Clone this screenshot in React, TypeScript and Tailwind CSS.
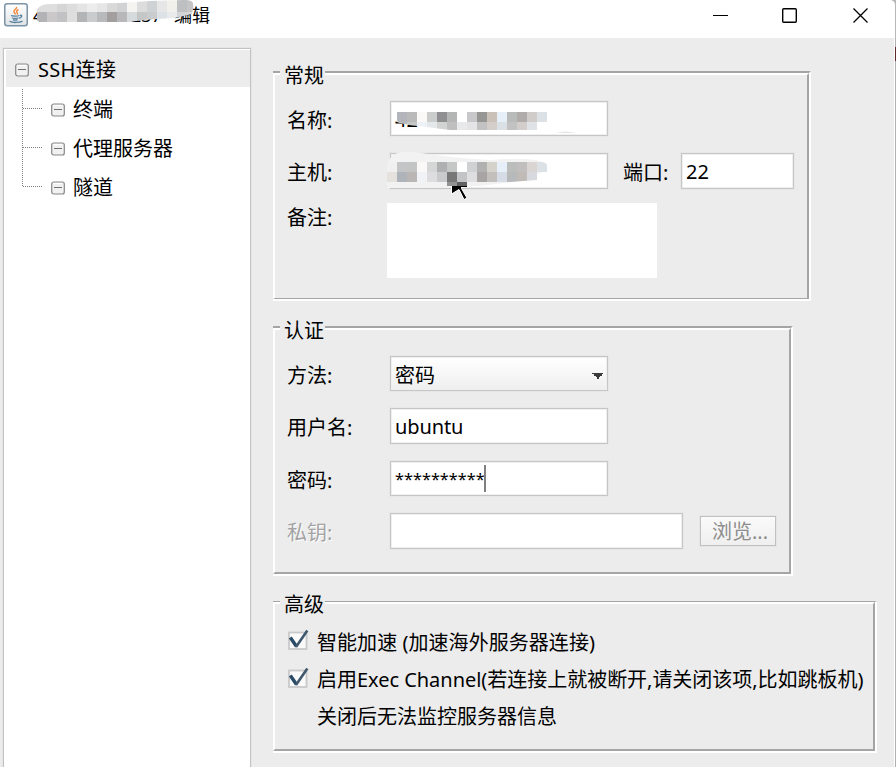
import React from "react";
import clsx from "clsx";

type Mosaic = { x: number; y: number; h: number; colors: string[] };

const TITLE_MOSAIC: Mosaic[] = [
  { x: 7, y: 0, h: 12, colors: ["#dedede", "#dedede", "#d6d6d6", "#dddddd", "#e4e4e4", "#ececec", "#e6e6e6", "#d9d9d9", "#d0d2d4", "#f5f4f1", "#dcdcdc", "#cfd2d5", "#e6e6e6", "#f1f0eb", "#bdbfc1", "#c5c5c5"] },
  { x: 7, y: 12, h: 10, colors: ["#b3b3b5", "#cac8c8", "#c2c2c4", "#dedede", "#b2b4b6", "#c9cbcd", "#b7b9bb", "#a39f9f", "#b8b8ba", "#d5dadd", "#c5c7c6", "#c9cbcd", "#dce2e6", "#e8eaec", "#d2d4d6", "#d8d8d8"] },
];

const NAME_MOSAIC: Mosaic[] = [
  { x: 7, y: 11, h: 10, colors: ["#b2b6bb", "#bababa", "#fbf9f7", "#cbcdcd", "#8f8f91", "#b4b5b5", "#ffffff", "#c8c8cb", "#969694", "#cac1b9", "#e7f0f8", "#b9bbbb", "#b0acac", "#cfccc9", "#dce1e6"] },
  { x: 7, y: 21, h: 8, colors: ["#b6babd", "#c6c8c8", "#eef1f5", "#e5e8eb", "#d2d3d3", "#bfbfbf", "#e8e9ea", "#e4e4e6", "#c2c2c3", "#d4ceca", "#dbe0e4", "#c2c2c2", "#d3cecb", "#dfe3e8"] },
];

const HOST_MOSAIC: Mosaic[] = [
  { x: -3, y: 9, h: 10, colors: ["#f0f0f0", "#c3c5c7", "#c3c5c5", "#fbf9f7", "#d5d7d7", "#aeb0b1", "#c5c7c7", "#ffffff", "#d0d1d3", "#b1b1b2", "#d5d1cb", "#e7f0f8", "#bbbdbd", "#c0bfbd", "#dad5d2", "#dce1e6"] },
  { x: -3, y: 19, h: 10, colors: ["#e5e2dd", "#afb3ba", "#b9b6b5", "#f0f2f5", "#dddddf", "#c9cacb", "#777777", "#c2c4c6", "#dedee0", "#a8a4a3", "#c2bfbd", "#d5dce5", "#b7b9bb", "#c0bbb7", "#d7d9df"] },
];

function Cells({ rows }: { rows: Mosaic[] }) {
  return (
    <>
      {rows.map((row, r) =>
        row.colors.map((color, i) => (
          <rect key={`${r}-${i}`} x={row.x + i * 10} y={row.y} width={10} height={row.h} fill={color} shapeRendering="crispEdges" />
        )),
      )}
    </>
  );
}

function JavaIcon() {
  return (
    <svg width="24" height="24" viewBox="0 0 24 24" fill="none" className="shrink-0">
      <defs>
        <linearGradient id="java-bg" x1="0" y1="0" x2="0" y2="1">
          <stop offset="0" stopColor="#ffffff" />
          <stop offset="1" stopColor="#dfe3e6" />
        </linearGradient>
      </defs>
      <rect x="0.75" y="0.75" width="22.5" height="22" rx="2.5" fill="url(#java-bg)" stroke="#7d94a6" strokeWidth="1.5" />
      <path d="M12.5 4c.8 2-3.5 3-2.500 5 .4.9 1.4 1.2 1.3 2.500M14.500 6.500c-2 1-2.500 2-1.300 3.200.6.6.3 1.300-.2 1.800" stroke="#ee8434" strokeWidth="1.4" />
      <path d="M7 12.500c1 .8 7 .8 8.500 0M8 14.700c1.500.9 5 .9 6.500 0M9 16.600c1.200.6 3.300.6 4.500 0M16 12.300c2.500-.5 2.300 2-.8 3M5.500 18.300c3 1.700 10 1.500 13-.2" stroke="#557f9e" strokeWidth="1.3" />
    </svg>
  );
}

function TreeBox() {
  return (
    <svg width="14" height="14" viewBox="0 0 14 14" fill="none" className="shrink-0">
      <rect x="0.7" y="1" width="12.6" height="12" rx="2" fill="#f1f1f1" stroke="#878787" strokeWidth="1.2" />
      <path d="M2.5 2.500h9" stroke="#fff" />
      <path d="M3 6.500h8" stroke="#6f6f6f" />
    </svg>
  );
}

function TreeItem({ label }: { label: string }) {
  return (
    <div className="flex h-[39px] items-center pl-[46px]">
      <TreeBox />
      <span className="ml-[8px]">{label}</span>
    </div>
  );
}

type GroupProps = {
  title: string;
  outer: string;
  inner: string;
  children: React.ReactNode;
};

function Group({ title, outer, inner, children }: GroupProps) {
  return (
    <section className={clsx("flex border-r-2 border-b-2 border-t-[#a5a5a5] border-r-white border-b-white", outer)}>
      <div className={clsx("flex-1 border-t-2 border-r-2 border-l-2 border-t-white border-r-[#a5a5a5] border-b-[#a5a5a5] border-l-white", inner)}>
        <div className="-mt-3 ml-[5px] flex h-6 w-[45px] items-center bg-[#ececec] pt-[2px] pl-[4px]">{title}</div>
        <div className="pl-[11px]">{children}</div>
      </div>
    </section>
  );
}

type RowProps = {
  label: string;
  className: string;
  labelClass?: string;
  children: React.ReactNode;
};

function Row({ label, className, labelClass = "items-center pt-[4px]", children }: RowProps) {
  return (
    <div className={clsx("flex", className)}>
      <div className={clsx("flex w-[104px] shrink-0 pl-px", labelClass)}>{label}</div>
      {children}
    </div>
  );
}

function Field({ className, children }: { className: string; children?: React.ReactNode }) {
  return (
    <div className={clsx("relative flex h-full shrink-0 items-center border border-[#c6c6c6] bg-white pl-1 shadow-[inset_0_0_0_1px_#efefef,0_0_0_1px_#e7e7e7]", className)}>
      {children}
    </div>
  );
}

function CheckMark() {
  return (
    <svg width="22" height="22" viewBox="0 0 22 22" fill="none" className="-mt-[3px] shrink-0">
      <rect x="2" y="3.500" width="17.500" height="16.500" fill="#fafafa" stroke="#c9c9c9" strokeWidth="1.8" />
      <path d="M3.300 8.500 9.500 17.500" stroke="#294a66" strokeWidth="3.4" />
      <path d="M9 18 20.300 1.500" stroke="#40586d" strokeWidth="2.6" />
    </svg>
  );
}

function TitleBar() {
  return (
    <header className="flex h-[38px] bg-white">
      <div className="relative flex h-[30px] flex-1 items-center pl-1">
        <JavaIcon />
        <span className="ml-[5px] w-[98px] text-[18px]">4</span>
        <span className="text-[18px]">237</span>
        <span className="ml-[12px] text-[18px]">编辑</span>
        <svg className="absolute top-0 left-[30px]" width="170" height="24" viewBox="0 0 170 24">
          <clipPath id="title-smudge">
            <path d="M5.500 13C7 7 12 4 20 4L90 3 120 1 154 0C163 0 164 2 163 9L162 14 145 18 112 20 100 22H10C7 21 5.500 19 5.500 13Z" />
          </clipPath>
          <g clipPath="url(#title-smudge)">
            <Cells rows={TITLE_MOSAIC} />
          </g>
        </svg>
      </div>
      <svg width="183" height="38" viewBox="0 0 183 38" fill="none" stroke="#000">
        <path d="M0 15.500h15" />
        <rect x="69.700" y="8.700" width="13.600" height="13.600" rx="1" strokeWidth="1.4" />
        <path d="m140.500 8.500 14 14M154.500 8.500l-14 14" strokeWidth="1.3" />
        <path d="M178 0h5v38h-1V5q0-4-4-5Z" fill="#b8b8b8" stroke="none" />
      </svg>
    </header>
  );
}

function Sidebar() {
  return (
    <nav className="relative mt-[10px] ml-[3px] w-[248px] shrink-0 border border-b-0 border-[#c3c3c3] bg-white pt-px pl-[2px] shadow-[0_0_0_1px_#e5e5e5]">
      <div className="flex h-[37px] items-center bg-[#ececec] pt-[3px] pl-[9px]">
        <TreeBox />
        <span className="ml-[9px] tracking-[0.3px]">SSH连接</span>
      </div>
      <div className="-ml-[1px] pt-[3px]">
        <TreeItem label="终端" />
        <TreeItem label="代理服务器" />
        <TreeItem label="隧道" />
      </div>
      <svg className="absolute top-[39px] left-[18px]" width="22" height="104" viewBox="0 0 22 104" stroke="#808080" strokeDasharray="1 1" fill="none">
        <path d="M.5 1v98M1 20.500h19M1 59.500h19M1 98.500h19" />
      </svg>
    </nav>
  );
}

export default function App() {
  return (
    <div className="flex h-[767px] w-[896px] flex-col overflow-hidden bg-[#ececec] font-['Noto_Sans','Noto_Sans_CJK_SC',sans-serif] text-[20px] leading-6 whitespace-nowrap text-black">
      <TitleBar />
      <div className="flex min-h-0 flex-1">
        <Sidebar />
        <main className="flex-1 pt-[33px] pl-[22px]">
          <Group title="常规" outer="h-[230px] w-[538px] border-t-2" inner="border-b">
            <Row label="名称:" className="mt-[14px] h-[35px]" labelClass="items-center pt-[5px]">
              <Field className="w-[218px]">
                <span className="pt-[3px]">42</span>
                <svg className="absolute -top-px -left-px" width="218" height="35" viewBox="0 0 218 35">
                  <path d="M5 20V8Q8 4 19 3H160V28H80L28 24Q10 23 5 20Z" fill="#fff" />
                  <clipPath id="name-smudge">
                    <path d="M7 11H160V29H60L28 25Q10 23 7 20Z" />
                  </clipPath>
                  <g clipPath="url(#name-smudge)">
                    <Cells rows={NAME_MOSAIC} />
                  </g>
                  <path d="M166 32q10-3 20 0Z" fill="#e5e5e5" />
                </svg>
              </Field>
            </Row>
            <Row label="主机:" className="mt-[17px] h-9">
              <Field className="w-[218px]">
                <svg className="absolute -top-[2px] -left-[4px]" width="190" height="52" viewBox="-3 -1 190 52">
                  <path d="M-3 12Q0 0 12-1H25Q60 5 100 7 150 3 157 12L155 18 130 28 90 33 40 35H-3Z" fill="#f2f2f2" />
                  <clipPath id="host-smudge">
                    <path d="M-3 9H150Q157 9 157 13V19H147V27L120 29H-3Z" />
                  </clipPath>
                  <g clipPath="url(#host-smudge)">
                    <Cells rows={HOST_MOSAIC} />
                  </g>
                  <path d="M61.500 32.500h10v3l5.500 9.500-3 1.500-5-10-7.500 4.500Z" fill="#000" stroke="#fff" strokeWidth="1" />
                  <path d="M57 29h10v4H57Z" fill="#929292" />
                  <path d="M67 29h10v4H67Z" fill="#606062" />
                  <path d="M67 33h10v1H67Z" fill="#000" />
                </svg>
              </Field>
              <div className="ml-[15px] flex w-[58px] items-center pt-[3px]">端口:</div>
              <Field className="w-[113px]">
                <span className="pt-[2px]">22</span>
              </Field>
            </Row>
            <Row label="备注:" className="mt-[14px] h-[75px]" labelClass="items-start pt-[3px]">
              <div className="-ml-[3px] h-[75px] w-[270px] bg-white" />
            </Row>
          </Group>

          <Group title="认证" outer="mt-[25px] h-[250px] w-[520px] border-t-2" inner="border-b-2">
            <Row label="方法:" className="mt-[14px] h-[35px]" labelClass="items-center pt-[5px]">
              <Field className="w-[218px] justify-between bg-linear-to-b from-white to-[#efefef] pr-[4px]">
                <span className="pt-[5px]">密码</span>
                <svg width="11" height="6" viewBox="0 0 11 6" className="mt-[5px]">
                  <path d="M0 0h11v1H10v2H8v1H7v2H5V4H4V3H2V1H0Z" fill="#3b3b3b" />
                </svg>
              </Field>
            </Row>
            <Row label="用户名:" className="mt-[17px] h-9">
              <Field className="w-[218px]">
                <span className="pt-[2px] tracking-[-0.1px]">ubuntu</span>
              </Field>
            </Row>
            <Row label="密码:" className="mt-[17px] h-[35px]" labelClass="items-center pt-[5px]">
              <Field className="w-[218px]">
                <span className="w-[89px] text-[16.300px]">**********</span>
                <span className="h-[27px] w-[2px] bg-[#808080]" />
              </Field>
            </Row>
            <Row label="私钥:" className="mt-[17px] h-9" labelClass="items-center pt-[4px] text-[#a3a3a3] [text-shadow:1px_1px_0_#fff]">
              <Field className="w-[293px]" />
              <button className="mt-[3px] ml-[17px] flex h-[30px] w-[76px] items-center justify-center border border-[#c1c1c1] bg-linear-to-b from-[#fafafa] to-[#efefef] pt-[2px] pl-[4px] text-[#8d8d8d] shadow-[0_0_0_1px_#e5e5e5]">
                浏览...
              </button>
            </Row>
          </Group>

          <Group title="高级" outer="mt-[25px] h-[152px] w-[604px] border-t" inner="border-b-2">
            <div className="flex flex-col pt-[7px]">
              <div className="flex h-[37px] items-center pl-[1px]">
                <CheckMark />
                <span className="ml-[8px] pt-[2px] tracking-[0.05px]">智能加速 (加速海外服务器连接)</span>
              </div>
              <div className="flex h-[38px] items-center pl-[1px]">
                <CheckMark />
                <span className="ml-[8px] pt-[2px] tracking-[-0.03px]">启用Exec Channel(若连接上就被断开,请关闭该项,比如跳板机)</span>
              </div>
              <div className="flex h-[38px] items-center pl-[31px]">
                <span>关闭后无法监控服务器信息</span>
              </div>
            </div>
          </Group>
        </main>
        <div className="relative w-[2px] shrink-0 border-r border-l border-r-[#b0b0b0] border-l-white">
          <div className="absolute top-[9px] left-0 h-[14px] w-px bg-[#5e2b2b]" />
        </div>
      </div>
    </div>
  );
}
